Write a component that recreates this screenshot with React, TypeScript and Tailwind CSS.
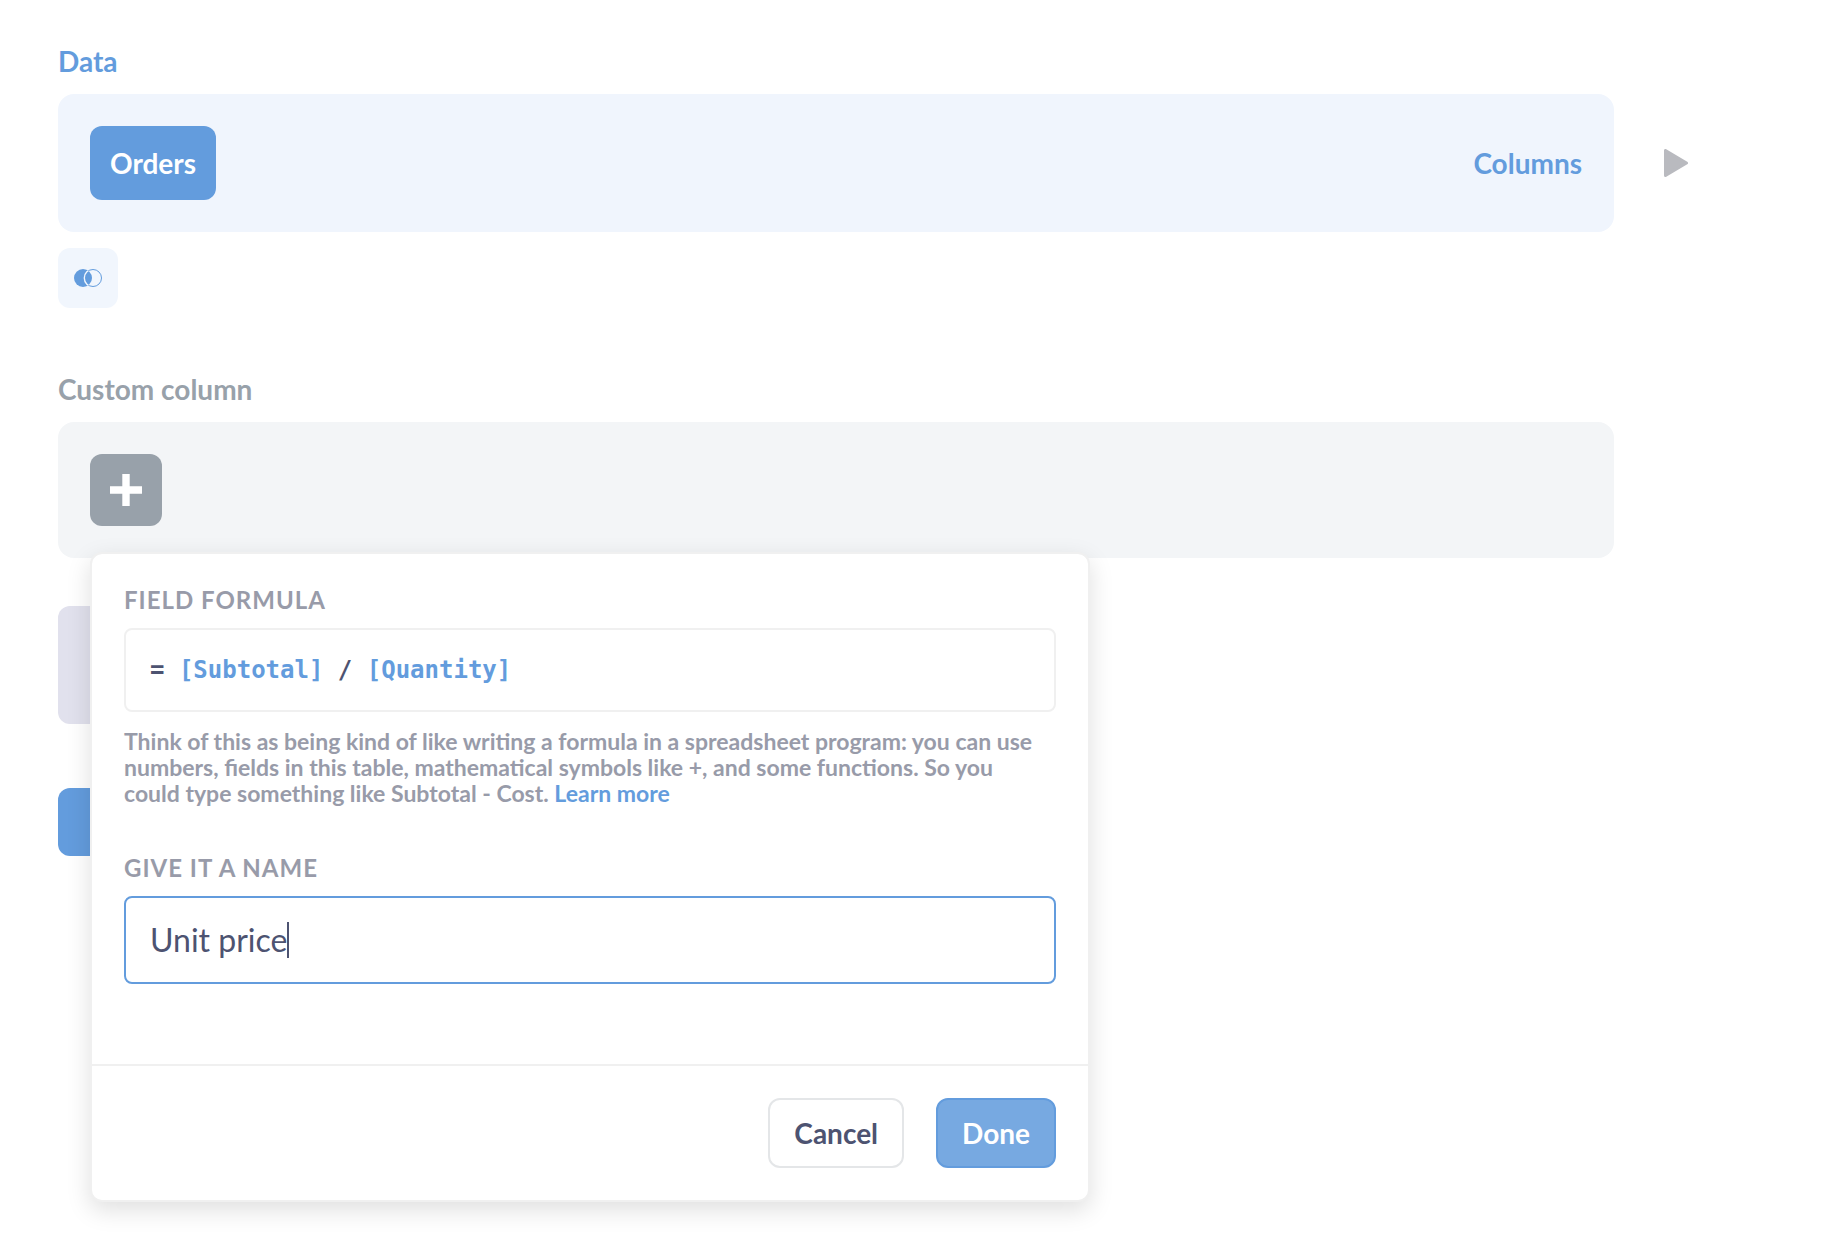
import { useState } from 'react'
import type { ReactNode } from 'react'

type StepProps = {
    title: string
    titleClass: string
    panelClass: string
    children: ReactNode
    aside?: ReactNode
}

function JoinIcon() {
    return (
        <svg width="28" height="18" viewBox="0 0 28 18" fill="none" aria-hidden="true">
            <clipPath id="left-circle">
                <circle cx="9" cy="9" r="9" />
            </clipPath>
            <circle cx="19" cy="9" r="8.5" stroke="#639cdd" strokeWidth="1" />
            <circle cx="9" cy="9" r="9" fill="#639cdd" />
            <circle cx="19" cy="9" r="8.7" stroke="#f1f6fd" strokeWidth="1.4" clipPath="url(#left-circle)" />
        </svg>
    )
}

function PlayIcon() {
    return (
        <svg width="24" height="28" viewBox="0 0 24 28" aria-hidden="true">
            <path d="M1.5 1.5v25L22.5 14z" fill="#b9babf" stroke="#b9babf" strokeWidth="3" strokeLinejoin="round" />
        </svg>
    )
}

function PlusIcon() {
    return (
        <svg width="32" height="32" viewBox="0 0 32 32" fill="#fff" aria-hidden="true">
            <path d="M12.3 0h7.4v12.3H32v7.4H19.7V32h-7.4V19.7H0v-7.4h12.3z" />
        </svg>
    )
}

function Step({ title, titleClass, panelClass, children, aside }: StepProps) {
    return (
        <section>
            <h2 className={`text-[28px] leading-[30px] font-bold ${titleClass}`}>{title}</h2>
            <div className="mt-[18px] flex items-center">
                <div className={`relative flex flex-1 items-center justify-between rounded-2xl p-8 ${panelClass}`}>
                    {children}
                </div>
                <div className="w-56 pl-[50px]">{aside}</div>
            </div>
        </section>
    )
}

function FormulaPopover() {
    const [name, setName] = useState('Unit price')

    return (
        <div className="absolute top-[130px] left-8 z-10 w-[1000px] rounded-xl border-2 border-[#f0f0f0] bg-white bg-clip-padding shadow-[0_8px_24px_rgba(0,0,0,0.13)]">
            <div className="px-8 pt-8 pb-20">
                <h3 className="text-2xl leading-7 font-bold tracking-[1px] text-[#989ba9]">FIELD FORMULA</h3>
                <div className="mt-[14px] flex h-[84px] items-center rounded-lg border-2 border-[#f0f0f0] px-6 text-2xl whitespace-pre text-[#4d5371]">
                    <code className="font-['DejaVu_Sans_Mono',monospace] font-bold">
                        = <span className="text-[#639cdd]">[Subtotal]</span> / <span className="text-[#639cdd]">[Quantity]</span>
                    </code>
                </div>
                <p className="mt-4 pr-2 text-[23px] leading-[26px] font-bold text-[#989ba9]">
                    Think of this as being kind of like writing a formula in a spreadsheet program: you can use
                    numbers, fields in this table, mathematical symbols like +, and some functions. So you
                    could type something like Subtotal - Cost.{' '}
                    <a href="#learn" className="text-[#639cdd]">Learn more</a>
                </p>

                <label htmlFor="column-name" className="mt-12 block text-2xl leading-7 font-bold tracking-[1px] text-[#989ba9]">
                    GIVE IT A NAME
                </label>
                <div className="mt-[14px] flex h-[88px] items-center rounded-lg border-2 border-[#639cdd] px-6">
                    <input
                        id="column-name"
                        value={name}
                        onChange={(e) => setName(e.target.value)}
                        className="field-sizing-content text-[32px] leading-9 text-[#4d5371] caret-transparent outline-none"
                    />
                    {/* text cursor */}
                    <span className="h-9 w-0.5 bg-[#4d5371]" />
                </div>
            </div>

            <div className="flex justify-end gap-8 border-t-2 border-[#f0f0f0] p-8">
                <button className="h-[70px] rounded-xl border-2 border-[#e4e6e8] bg-white px-6 text-[28px] leading-8 font-bold text-[#4d5371]">
                    Cancel
                </button>
                <button className="h-[70px] rounded-xl border-2 border-[#639cdd] bg-[#77a9e1] px-6 text-[28px] leading-8 font-bold text-white">
                    Done
                </button>
            </div>
        </div>
    )
}

function App() {
    return (
        <main className="min-h-screen bg-white pt-[46px] pl-[58px] font-['Lato',sans-serif]">
            <Step
                title="Data"
                titleClass="text-[#639cdd]"
                panelClass="bg-[#f0f5fd]"
                aside={<button aria-label="Preview" className="block"><PlayIcon /></button>}
            >
                <button className="h-[74px] rounded-xl bg-[#639cdd] px-5 text-[28px] font-bold text-white">Orders</button>
                <button className="text-[28px] font-bold text-[#639cdd]">Columns</button>
            </Step>

            <button aria-label="Join data" className="mt-4 flex size-[60px] items-center justify-center rounded-xl bg-[#f1f6fd]">
                <JoinIcon />
            </button>

            <div className="mt-[66px]">
                <Step title="Custom column" titleClass="text-[#98a1aa]" panelClass="bg-[#f3f5f7]">
                    <button aria-label="Add column" className="flex size-[72px] items-center justify-center rounded-xl bg-[#98a1aa]">
                        <PlusIcon />
                    </button>
                    <FormulaPopover />
                </Step>
            </div>

            <button aria-label="Summarize" className="mt-12 block h-[118px] w-60 rounded-xl bg-[#e1e1ed]" />
            <button aria-label="Visualize" className="mt-16 block h-[68px] w-60 rounded-xl bg-[#639cdd]" />
        </main>
    )
}

export default App
